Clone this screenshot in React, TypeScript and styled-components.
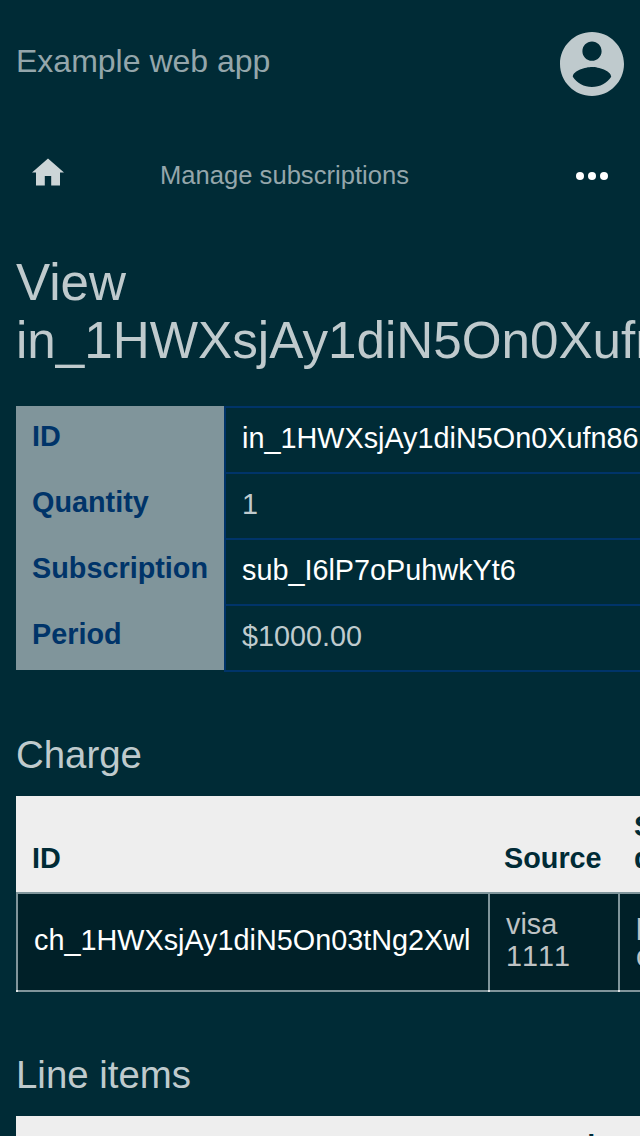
import React from "react";
import styled, { createGlobalStyle } from "styled-components";

const Global = createGlobalStyle`
  html, body, #root { height: 100%; }
  body {
    margin: 0;
    overflow: hidden;
    background: #002b36;
    color: #bfcacd;
    font: 28.8px/32px "Liberation Sans", Arial, sans-serif;
  }
`;

const Page = styled.div`
  height: 100%;
  overflow: hidden;
  padding: 0 16px;
  box-sizing: border-box;
`;

const Header = styled.header`
  display: flex;
  justify-content: space-between;
  align-items: center;
  height: 128px;
`;

const AppName = styled.div`
  font-size: 32px;
  line-height: 36px;
  padding-bottom: 6px;
  color: #94a6ab;
`;

const AccountIcon = styled.svg`
  width: 64px;
  height: 64px;
  fill: #bfcacd;
`;

const Nav = styled.nav`
  display: flex;
  align-items: center;
  height: 96px;
  padding: 0 16px;
`;

const HomeIcon = styled.svg`
  width: 32px;
  height: 28px;
  margin: -8px 96px 0 0;
  fill: #ccd5d7;
`;

const NavLink = styled.a`
  flex: 1;
  padding-bottom: 2px;
  font-size: 25.6px;
  line-height: 30px;
  color: #94a6ab;
`;

const Dots = styled.svg`
  width: 32px;
  height: 8px;
  fill: #fff;
`;

const Title = styled.h1`
  margin: 30px 0 36px;
  font-size: 51.2px;
  line-height: 58px;
  font-weight: 400;
`;

const Section = styled.h2`
  margin: 61px 0 19px;
  font-size: 38.4px;
  line-height: 44px;
  font-weight: 400;
`;

const Details = styled.table`
  border-collapse: separate;
  border-spacing: 0;
  width: 660px;
`;

const Label = styled.th`
  box-sizing: border-box;
  width: 208px;
  height: 66px;
  padding: 14px 16px 20px;
  background: #80959b;
  color: #003469;
  text-align: left;
  line-height: 32px;
`;

const Value = styled.td<{ $link?: boolean }>`
  box-sizing: border-box;
  height: 66px;
  padding: 14px 16px 18px;
  border: solid #003469;
  border-width: 2px 0 0 2px;
  white-space: nowrap;
  color: ${(p) => (p.$link ? "#fff" : "#bfcacd")};
  tr:last-child > & {
    height: 68px;
    border-bottom-width: 2px;
  }
`;

const DetailsRow = styled.tr`
  &:last-child ${Label} {
    background: linear-gradient(#80959b 66px, transparent 66px);
    padding-bottom: 22px;
  }
`;

const Grid = styled.table`
  border-collapse: separate;
  border-spacing: 0;
  table-layout: fixed;
  width: 802px;
`;

const Head = styled.th<{ $w: number }>`
  box-sizing: border-box;
  width: ${(p) => p.$w}px;
  padding: 14px 16px 18px;
  background: #eee;
  color: #002b36;
  text-align: left;
  vertical-align: bottom;
`;

const Cell = styled.td<{ $link?: boolean }>`
  position: relative;
  box-sizing: border-box;
  height: 100px;
  padding: 14px 16px 18px;
  border: 2px solid #80959b;
  border-right: 0;
  background: #002028;
  color: ${(p) => (p.$link ? "#fff" : "#bfc3c4")};
  font-kerning: ${(p) => (p.$link ? "auto" : "none")};

  /* bright joint where the column and row lines meet */
  &::after {
    content: "";
    position: absolute;
    left: -2px;
    bottom: -2px;
    width: 2px;
    height: 2px;
    background: #dfe4e5;
  }
`;

const details = [
  { label: "ID", value: "in_1HWXsjAy1diN5On0Xufn86", link: true },
  { label: "Quantity", value: "1" },
  { label: "Subscription", value: "sub_I6lP7oPuhwkYt6", link: true },
  { label: "Period", value: "$1000.00" },
];

export default function App() {
  return (
    <Page>
      <Global />
      <Header>
        <AppName>Example web app</AppName>
        <AccountIcon viewBox="2 2 20 20">
          <path d="M12 2C6.48 2 2 6.48 2 12s4.48 10 10 10 10-4.48 10-10S17.52 2 12 2zm0 3c1.66 0 3 1.34 3 3s-1.34 3-3 3-3-1.34-3-3 1.34-3 3-3zm0 14.2c-2.5 0-4.71-1.28-6-3.22.03-1.99 4-3.08 6-3.08 1.99 0 5.97 1.09 6 3.08-1.29 1.94-3.5 3.22-6 3.22z" />
        </AccountIcon>
      </Header>
      <Nav>
        <HomeIcon viewBox="0 0 32 28">
          <path d="M12.8 27.6V18h6.4v9.6H28V14.5h4L16 .4 0 14.5h4v13.1z" />
        </HomeIcon>
        <NavLink>Manage subscriptions</NavLink>
        <Dots viewBox="0 0 32 8">
          <circle cx="4" cy="4" r="4" />
          <circle cx="16" cy="4" r="4" />
          <circle cx="28" cy="4" r="4" />
        </Dots>
      </Nav>
      <Title>View in_1HWXsjAy1diN5On0Xufn86</Title>
      <Details>
        <tbody>
          {details.map((d) => (
            <DetailsRow key={d.label}>
              <Label>{d.label}</Label>
              <Value $link={d.link}>{d.value}</Value>
            </DetailsRow>
          ))}
        </tbody>
      </Details>
      <Section>Charge</Section>
      <Grid>
        <thead>
          <tr>
            <Head $w={472}>ID</Head>
            <Head $w={130}>Source</Head>
            <Head $w={200}>Start<br />date</Head>
          </tr>
        </thead>
        <tbody>
          <tr>
            <Cell $link>ch_1HWXsjAy1diN5On03tNg2Xwl</Cell>
            <Cell>visa 1111</Cell>
            <Cell>plan<br />change</Cell>
          </tr>
        </tbody>
      </Grid>
      <Section>Line items</Section>
      <Grid>
        <thead>
          <tr>
            <Head $w={472}>ID</Head>
            <Head $w={330}>Quantity</Head>
          </tr>
        </thead>
      </Grid>
    </Page>
  );
}
